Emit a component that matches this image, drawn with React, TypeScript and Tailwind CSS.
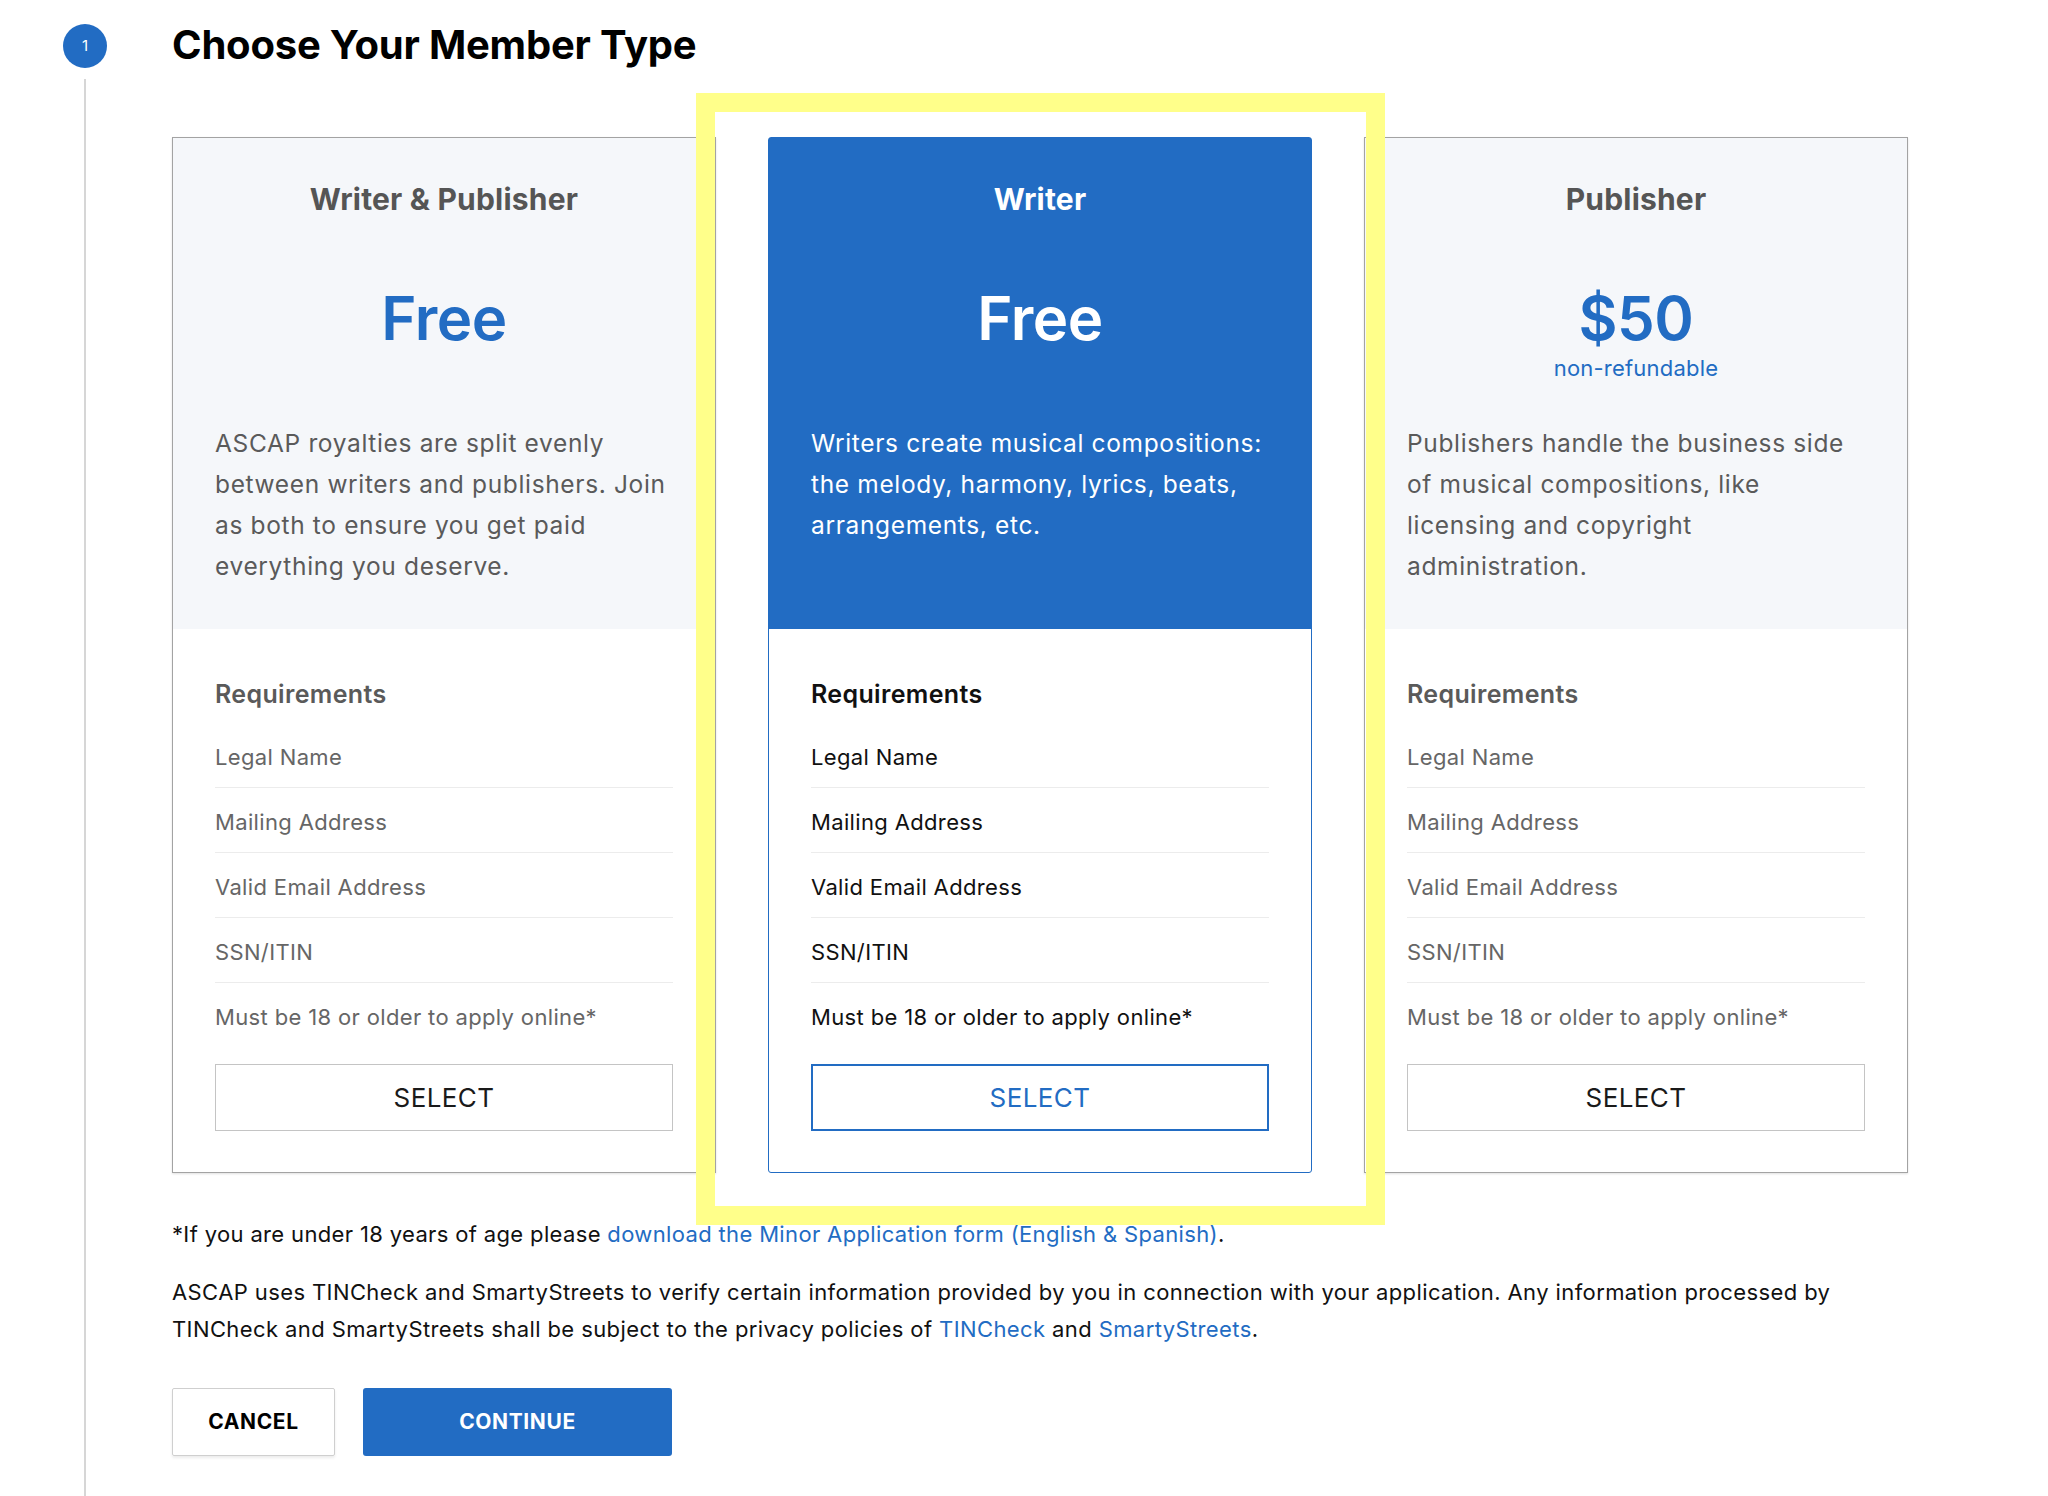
import { FC } from "react";

type Plan = {
  title: string;
  price: string;
  note?: string;
  lines: string[];
  active?: boolean;
};

const PLANS: Plan[] = [
  {
    title: "Writer & Publisher",
    price: "Free",
    lines: [
      "ASCAP royalties are split evenly",
      "between writers and publishers. Join",
      "as both to ensure you get paid",
      "everything you deserve.",
    ],
  },
  {
    title: "Writer",
    price: "Free",
    active: true,
    lines: [
      "Writers create musical compositions:",
      "the melody, harmony, lyrics, beats,",
      "arrangements, etc.",
    ],
  },
  {
    title: "Publisher",
    price: "$50",
    note: "non-refundable",
    lines: [
      "Publishers handle the business side",
      "of musical compositions, like",
      "licensing and copyright",
      "administration.",
    ],
  },
];

const REQUIREMENTS = [
  "Legal Name",
  "Mailing Address",
  "Valid Email Address",
  "SSN/ITIN",
  "Must be 18 or older to apply online*",
];

const PlanCard: FC<{ plan: Plan }> = ({ plan }) => {
  const active = plan.active;
  return (
    <div
      className={[
        "flex w-[544px] flex-col border",
        active
          ? "rounded-[3px] border-[#226cc3] bg-white"
          : "border-[#a3a3a3] bg-white shadow-[0_1px_2px_rgba(0,0,0,0.12)]",
      ].join(" ")}
    >
      <div
        className={[
          "flex h-[491px] flex-col items-center pt-[43px]",
          active ? "bg-[#226cc3] text-white" : "bg-[#f5f7fa] text-[#555]",
        ].join(" ")}
      >
        <div className="text-[30px] font-bold leading-[36px] tracking-[0.2px]">
          {plan.title}
        </div>
        <div className="mt-[65px] flex h-[140px] flex-col items-center">
          <div
            className={[
              "text-[60px] font-semibold leading-[72px] tracking-[-0.5px]",
              active ? "text-white" : "text-[#226cc3]",
            ].join(" ")}
          >
            {plan.price}
          </div>
          {plan.note && (
            <div className="mt-[2px] text-[22px] leading-[24px] tracking-[0.2px] text-[#226cc3]">
              {plan.note}
            </div>
          )}
        </div>
        <div
          className={[
            "w-full whitespace-nowrap px-[42px] pt-[1px] text-[24.5px] leading-[41px] tracking-[0.65px]",
            active ? "text-white" : "text-[#5a5a5a]",
          ].join(" ")}
        >
          {plan.lines.map((l) => (
            <div key={l}>{l}</div>
          ))}
        </div>
      </div>

      <div className="flex flex-col px-[42px] pt-[50px] pb-[41px]">
        <div
          className={[
            "text-[25px] font-semibold leading-[30px] tracking-[0.35px]",
            active ? "text-[#111]" : "text-[#5a5a5a]",
          ].join(" ")}
        >
          Requirements
        </div>
        <div className="mt-[14px] flex flex-col">
          {REQUIREMENTS.map((r, i) => (
            <div
              key={r}
              className={[
                "flex h-[65px] items-center pt-[4px] text-[22px] tracking-[0.35px]",
                i < REQUIREMENTS.length - 1 ? "border-b border-[#ececec]" : "",
                active ? "text-[#111]" : "text-[#666]",
              ].join(" ")}
            >
              {r}
            </div>
          ))}
        </div>
        <button
          className={[
            "mt-[16px] h-[67px] w-full text-[26px] tracking-[0.4px]",
            active
              ? "border-2 border-[#226cc3] text-[#226cc3]"
              : "border border-[#c4c4c4] text-[#1a1a1a]",
          ].join(" ")}
        >
          SELECT
        </button>
      </div>
    </div>
  );
};

export default function App() {
  return (
    <div className="flex min-h-[1496px] bg-white font-['Inter','Liberation_Sans',sans-serif] text-[#111]">
      <div className="flex w-[170px] flex-col items-center">
        <div className="mt-[24px] flex size-[44px] items-center justify-center rounded-full bg-[#226cc3] text-[15px] text-white">
          1
        </div>
        <div className="mt-[11px] w-[2px] flex-1 bg-[#d6d6d6]" />
      </div>

      <div className="flex flex-col pl-[2px]">
        <h1 className="mt-[21px] text-[40px] font-bold leading-[48px] tracking-[-0.2px] text-black">
          Choose Your Member Type
        </h1>

        <div className="relative mt-[68px] flex gap-[52px]">
          {PLANS.map((p) => (
            <PlanCard key={p.title} plan={p} />
          ))}
          {/* highlight annotation */}
          <div className="pointer-events-none absolute left-[524px] top-[-44px] h-[1132px] w-[689px] border-[19px] border-[#ffff8a]" />
        </div>

        <p className="mt-[43px] text-[22px] leading-[37px] tracking-[0.35px] text-[#111]">
          *If you are under 18 years of age please{" "}
          <a className="text-[#226cc3]">
            download the Minor Application form (English &amp; Spanish)
          </a>
          .
        </p>
        <p className="mt-[21px] whitespace-nowrap text-[22px] leading-[37px] tracking-[0.4px] text-[#111]">
          ASCAP uses TINCheck and SmartyStreets to verify certain information
          provided by you in connection with your application. Any information
          processed by
          <br />
          TINCheck and SmartyStreets shall be subject to the privacy policies
          of <a className="text-[#226cc3]">TINCheck</a> and{" "}
          <a className="text-[#226cc3]">SmartyStreets</a>.
        </p>

        <div className="mt-[40px] flex gap-[28px]">
          <button className="h-[68px] w-[163px] rounded-[2px] border border-[#cfcfcf] text-[21px] font-bold tracking-[0.6px] text-black shadow-[0_2px_3px_rgba(0,0,0,0.08)]">
            CANCEL
          </button>
          <button className="h-[68px] w-[309px] rounded-[3px] bg-[#226cc3] text-[21px] font-bold tracking-[0.6px] text-white">
            CONTINUE
          </button>
        </div>
      </div>
    </div>
  );
}
